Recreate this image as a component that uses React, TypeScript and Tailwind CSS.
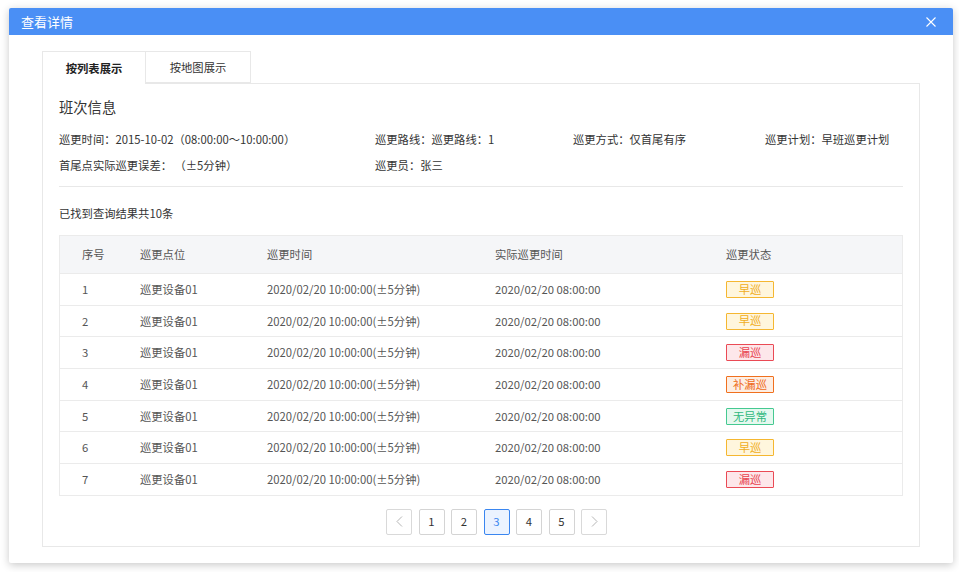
import React from "react";

type Status = "早巡" | "漏巡" | "补漏巡" | "无异常";

const badgeClass: Record<Status, string> = {
  早巡: "border-[#f5b731] bg-[#fff6dd] text-[#f0ad1c]",
  漏巡: "border-[#ea4a55] bg-[#fde7ea] text-[#e84450]",
  补漏巡: "border-[#f0701e] bg-[#fdeee3] text-[#ee6a17]",
  无异常: "border-[#45c991] bg-[#e6f8ef] text-[#2fb87d]",
};

const rows: { no: number; status: Status }[] = [
  { no: 1, status: "早巡" },
  { no: 2, status: "早巡" },
  { no: 3, status: "漏巡" },
  { no: 4, status: "补漏巡" },
  { no: 5, status: "无异常" },
  { no: 6, status: "早巡" },
  { no: 7, status: "漏巡" },
];

const cols = "grid grid-cols-[80px_127px_228px_231px_1fr] items-center";

function CloseIcon() {
  return (
    <svg width="10" height="10" viewBox="0 0 10 10" fill="none">
      <path d="M0.5 0.5L9.5 9.5M9.5 0.5L0.5 9.5" stroke="white" strokeWidth="1.1" />
    </svg>
  );
}

function Chevron({ dir }: { dir: "left" | "right" }) {
  return (
    <svg width="7" height="11" viewBox="0 0 7 11" fill="none">
      <path
        d={dir === "left" ? "M6 0.5L1 5.5L6 10.5" : "M1 0.5L6 5.5L1 10.5"}
        stroke="#b5b5b5"
        strokeWidth="1"
      />
    </svg>
  );
}

export default function App() {
  return (
    <div
      className="w-[959px] h-[572px] bg-white pt-[8px] pl-[9px] text-[#333]"
      style={{ fontFamily: '"Noto Sans CJK SC", "Noto Sans", sans-serif' }}
    >
      <div className="w-[944px] h-[555px] bg-white rounded-[2px] shadow-[0_2px_8px_rgba(0,0,0,0.22)] overflow-hidden">
        <div className="h-[27px] bg-[#4a8ff5] flex items-center justify-between pl-[12px] pr-[17px]">
          <span className="text-white text-[13px] leading-none">查看详情</span>
          <CloseIcon />
        </div>

        <div className="pt-[16px] pl-[33px]">
          <div className="flex h-[32px]">
            <div className="w-[104px] border border-b-0 border-[#e8e8e8] bg-white flex items-center justify-center text-[11.3px] font-bold text-[#222] relative z-10 h-[33px]">
              按列表展示
            </div>
            <div className="w-[105px] border border-l-0 border-[#e8e8e8] flex items-center justify-center text-[11.3px] text-[#333]">
              按地图展示
            </div>
          </div>

          <div className="w-[878px] h-[464px] border border-[#e8e8e8] px-[16px]">
            <div className="pt-[12px] text-[14.3px] leading-[22px] text-[#333]">班次信息</div>

            <div className="mt-[13px] grid grid-cols-[316px_198px_192px_1fr] text-[11.3px] leading-[16px] text-[#333] gap-y-[10px]">
              <div>巡更时间：2015-10-02（08:00:00～10:00:00）</div>
              <div>巡更路线：巡更路线：1</div>
              <div>巡更方式：仅首尾有序</div>
              <div>巡更计划：早班巡更计划</div>
              <div>首尾点实际巡更误差： （±5分钟）</div>
              <div>巡更员：张三</div>
            </div>

            <div className="mt-[13px] border-t border-[#e8e8e8]" />

            <div className="mt-[18px] text-[11.3px] leading-[16px] text-[#333]">已找到查询结果共10条</div>

            <div className="mt-[14px] border border-[#ebebeb] text-[11.3px] text-[#555]">
              <div className={`${cols} h-[37px] bg-[#f5f6f8]`}>
                <div className="pl-[22px]">序号</div>
                <div>巡更点位</div>
                <div>巡更时间</div>
                <div>实际巡更时间</div>
                <div>巡更状态</div>
              </div>
              {rows.map((r) => (
                <div key={r.no} className={`${cols} h-[31.7px] border-t border-[#ebebeb]`}>
                  <div className="pl-[22px]">{r.no}</div>
                  <div>巡更设备01</div>
                  <div>2020/02/20 10:00:00(±5分钟)</div>
                  <div>2020/02/20 08:00:00</div>
                  <div>
                    <span
                      className={`inline-flex items-center justify-center w-[48px] h-[17px] border rounded-[1px] text-[11.3px] leading-none ${badgeClass[r.status]}`}
                    >
                      {r.status}
                    </span>
                  </div>
                </div>
              ))}
            </div>

            <div className="mt-[13px] pl-[327px] flex gap-[6.5px] text-[11.3px] text-[#333]">
              <div className="w-[26px] h-[26px] border border-[#d9d9d9] rounded-[2px] flex items-center justify-center">
                <Chevron dir="left" />
              </div>
              {[1, 2, 3, 4, 5].map((n) => (
                <div
                  key={n}
                  className={
                    n === 3
                      ? "w-[26px] h-[26px] border border-[#3a86f0] bg-[#ebf3ff] text-[#3a86f0] rounded-[2px] flex items-center justify-center"
                      : "w-[26px] h-[26px] border border-[#d4d4d4] rounded-[2px] flex items-center justify-center"
                  }
                >
                  {n}
                </div>
              ))}
              <div className="w-[26px] h-[26px] border border-[#d9d9d9] rounded-[2px] flex items-center justify-center">
                <Chevron dir="right" />
              </div>
            </div>
          </div>
        </div>
      </div>
    </div>
  );
}
